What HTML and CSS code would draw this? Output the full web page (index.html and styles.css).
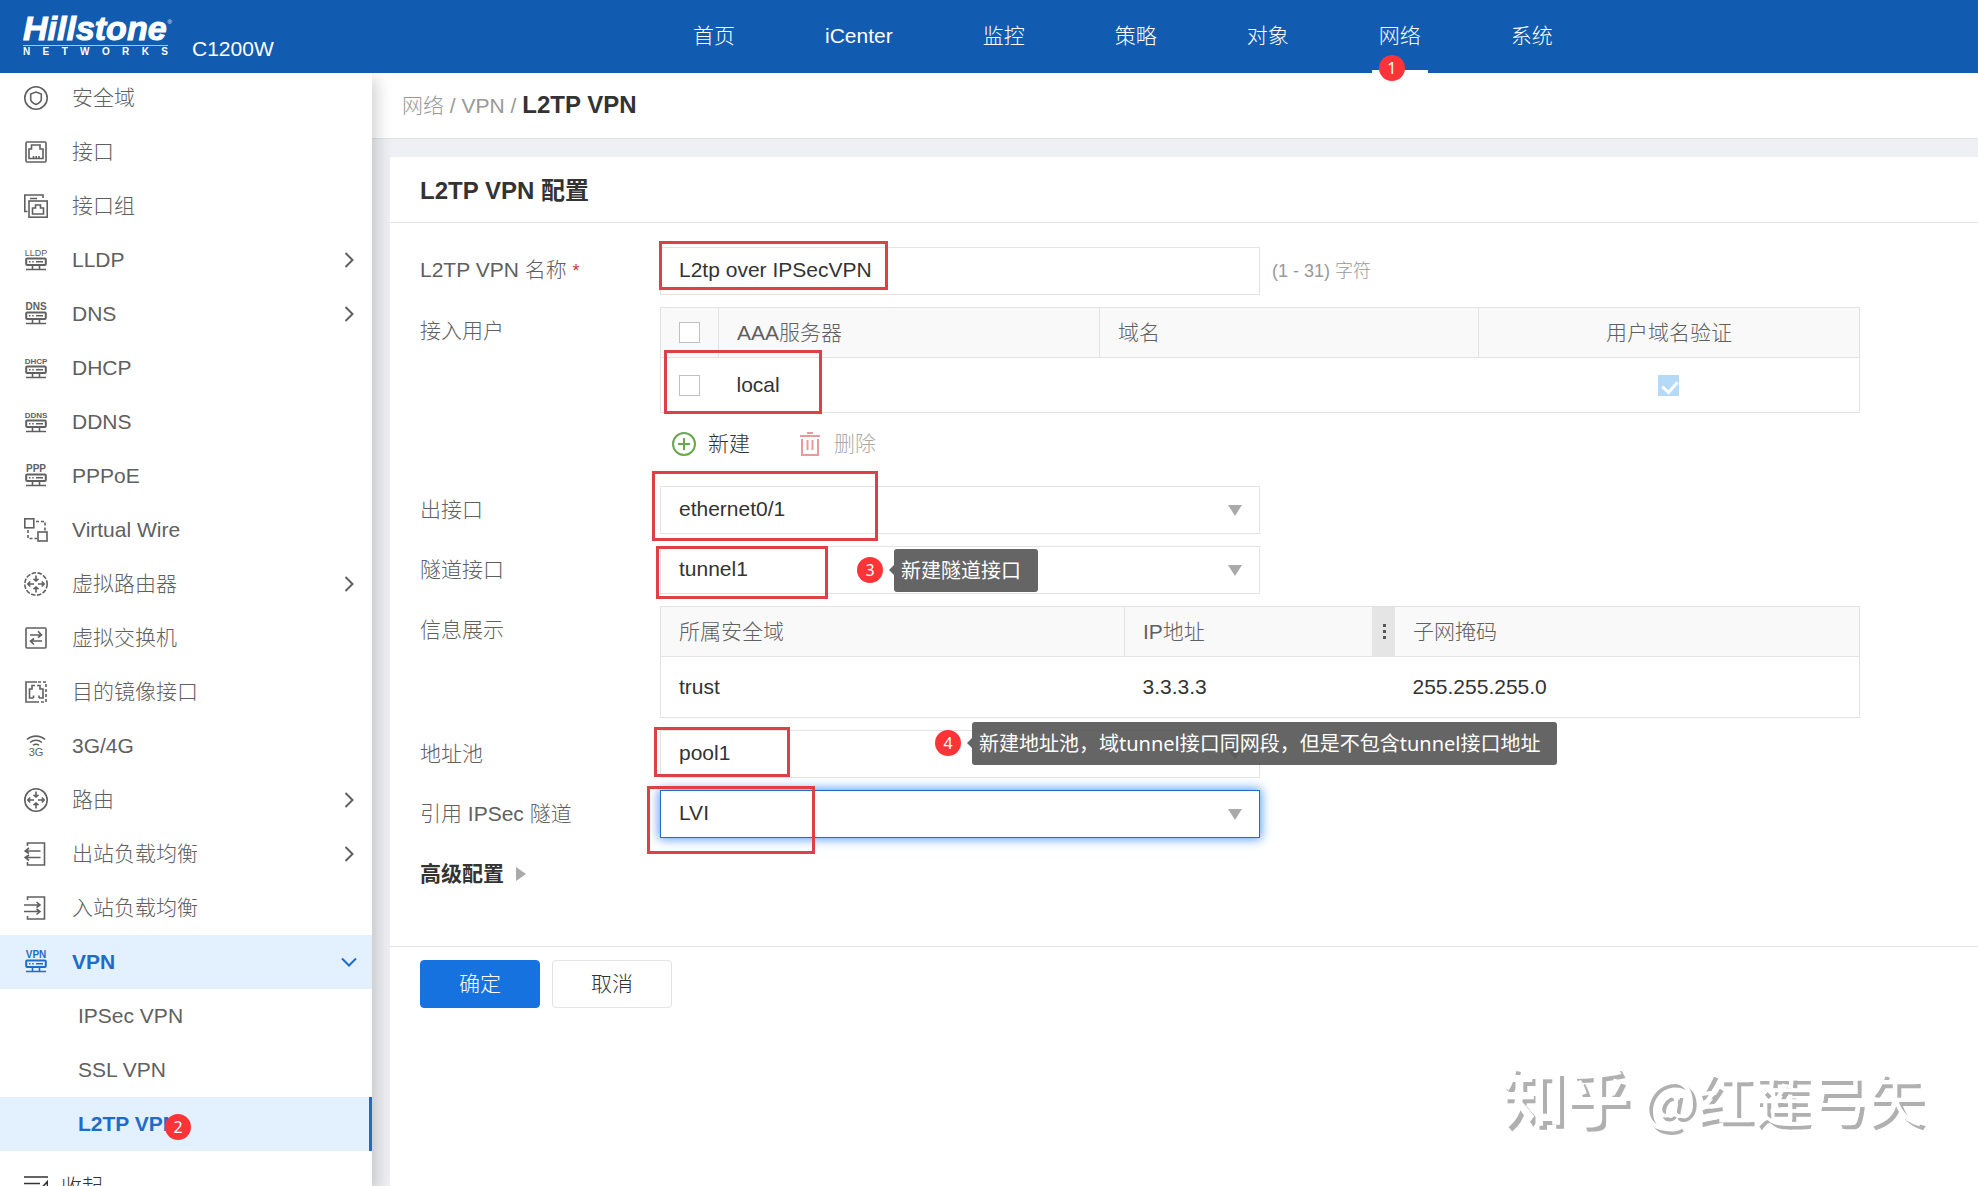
FILE: index.html
```html
<!DOCTYPE html>
<html lang="zh-CN">
<head>
<meta charset="utf-8">
<title>L2TP VPN</title>
<link rel="stylesheet" href="styles.css">
</head>
<body>
<svg class="defs" width="0" height="0" aria-hidden="true">
  <symbol id="server" viewBox="0 0 24 24">
    <rect x="2.200" y="10.500" width="19.600" height="6.500" rx="1" stroke-width="2"/>
    <path d="M5 13.800h1.500M8.200 13.800h1.500M12 13.800h7M8.500 17v4M15.500 17v4M2 21.500h20"/>
  </symbol>
  <symbol id="zone" viewBox="0 0 24 24"><circle cx="12" cy="12" r="11.200"/><path d="M12 6l5.300 2v5.200c0 2.400-2.400 4-5.300 5.300-2.900-1.300-5.300-2.900-5.300-5.300V8z"/></symbol>
  <symbol id="port" viewBox="0 0 24 24"><rect x="2" y="2" width="20" height="20" rx="1"/><path d="M5 18.500V9h2.500V5H16v4h3v9.500zM9.500 18.500v-2.500M12.200 18.500v-2.500M15 18.500v-2.500"/></symbol>
  <symbol id="ports" viewBox="0 0 24 24"><path d="M3.500 17.500H.8V1H19v3M6 4.500h7"/><rect x="5" y="7" width="18.200" height="16.200"/><path d="M8.500 20v-6h3v-3h5v3h3v6z"/></symbol>
  <symbol id="wire" viewBox="0 0 24 24"><rect x=".8" y=".8" width="9" height="9"/><rect x="14" y="14" width="9" height="9"/><path d="M12 3.500h9v10M4 12v8.500h9" stroke-dasharray="3 2"/></symbol>
  <symbol id="arrows" viewBox="0 0 24 24"><path d="M12 3.500v5.500M9.500 6.800L12 9l2.500-2.200M12 20.500V15M9.500 17.200L12 15l2.500 2.200M10 12H4M6.200 9.500L3.800 12l2.400 2.500M14 12h6M17.800 9.500l2.400 2.500-2.400 2.500"/></symbol>
  <symbol id="switch" viewBox="0 0 24 24"><rect x="2" y="2" width="20" height="20" rx="1"/><path d="M6 9h11.500M14 5.200L17.500 9 14 11.500M18 15H6.500M10 12.500L6.500 15l3.500 3.500"/></symbol>
  <symbol id="mirror" viewBox="0 0 24 24"><path d="M13 2H2v20h10"/><path d="M14 2h8v20H12" stroke-dasharray="3 2"/><path d="M9.500 18H5.500V9H8V5.500h3M13 5.500h3V9h3v9h-4M9.500 18v-2.500M15 18v-2.500"/></symbol>
  <symbol id="signal" viewBox="0 0 24 24"><path d="M3 5.500c5-4.500 13-4.500 18 0M6 8.500c3.500-3 8.500-3 12 0M9 11.200c1.800-1.200 4.200-1.200 6 0"/></symbol>
  <symbol id="outbound" viewBox="0 0 24 24"><path d="M3.500 4V1h17v22h-17v-3M16.500 9H1.500M5 6L1.200 9 5 11.500M16.500 15.500H1.500M5 13L1.200 15.500 5 18.500"/></symbol>
  <symbol id="inbound" viewBox="0 0 24 24"><path d="M3.500 4V1h17v22h-17v-3M0 9h15.500M12.500 6L16 9l-3.500 2.500M0 15.500h15.500M12.500 13l3.500 2.500-3.500 3"/></symbol>
  <symbol id="chevron" viewBox="0 0 16 16"><path d="M4.500 1l7 7-7 7"/></symbol>
</svg>

<header class="topbar">
  <div class="brand">
    <div class="logo">
      <div class="logo-name">Hillstone</div>
      <div class="logo-sub"><span>N</span><span>E</span><span>T</span><span>W</span><span>O</span><span>R</span><span>K</span><span>S</span></div>
      <span class="logo-mark">®</span>
    </div>
    <span class="model">C1200W</span>
  </div>
  <nav class="topnav">
    <a href="#">首页</a>
    <a href="#">iCenter</a>
    <a href="#">监控</a>
    <a href="#">策略</a>
    <a href="#">对象</a>
    <a href="#" class="current">网络<span class="badge badge-1">1</span></a>
    <a href="#">系统</a>
  </nav>
</header>

<div class="shell">
  <aside class="sidebar">
    <nav class="menu">
      <a href="#"><svg class="icon" viewBox="0 0 24 24"><use href="#zone"/></svg>安全域</a>
      <a href="#"><svg class="icon" viewBox="0 0 24 24"><use href="#port"/></svg>接口</a>
      <a href="#"><svg class="icon" viewBox="0 0 24 24"><use href="#ports"/></svg>接口组</a>
      <a href="#"><svg class="icon" viewBox="0 0 24 24"><use href="#server"/><text x="12" y="8" font-size="9">LLDP</text></svg>LLDP<svg class="chevron"><use href="#chevron"/></svg></a>
      <a href="#"><svg class="icon" viewBox="0 0 24 24"><use href="#server"/><text x="12" y="8" font-size="10" font-weight="700">DNS</text></svg>DNS<svg class="chevron"><use href="#chevron"/></svg></a>
      <a href="#"><svg class="icon" viewBox="0 0 24 24"><use href="#server"/><text x="12" y="8" font-size="8" font-weight="700">DHCP</text></svg>DHCP</a>
      <a href="#"><svg class="icon" viewBox="0 0 24 24"><use href="#server"/><text x="12" y="8" font-size="8" font-weight="700">DDNS</text></svg>DDNS</a>
      <a href="#"><svg class="icon" viewBox="0 0 24 24"><use href="#server"/><text x="12" y="8" font-size="10" font-weight="700">PPP</text></svg>PPPoE</a>
      <a href="#"><svg class="icon" viewBox="0 0 24 24"><use href="#wire"/></svg>Virtual Wire</a>
      <a href="#"><svg class="icon" viewBox="0 0 24 24"><circle cx="12" cy="12" r="11.200" stroke-dasharray="4.500 1.500"/><use href="#arrows"/></svg>虚拟路由器<svg class="chevron"><use href="#chevron"/></svg></a>
      <a href="#"><svg class="icon" viewBox="0 0 24 24"><use href="#switch"/></svg>虚拟交换机</a>
      <a href="#"><svg class="icon" viewBox="0 0 24 24"><use href="#mirror"/></svg>目的镜像接口</a>
      <a href="#"><svg class="icon" viewBox="0 0 24 24"><use href="#signal"/><text x="12" y="22" font-size="11">3G</text></svg>3G/4G</a>
      <a href="#"><svg class="icon" viewBox="0 0 24 24"><circle cx="12" cy="12" r="11.200"/><use href="#arrows"/></svg>路由<svg class="chevron"><use href="#chevron"/></svg></a>
      <a href="#"><svg class="icon" viewBox="0 0 24 24"><use href="#outbound"/></svg>出站负载均衡<svg class="chevron"><use href="#chevron"/></svg></a>
      <a href="#"><svg class="icon" viewBox="0 0 24 24"><use href="#inbound"/></svg>入站负载均衡</a>
      <a href="#" class="open"><svg class="icon" viewBox="0 0 24 24"><use href="#server"/><text x="12" y="8" font-size="10" font-weight="700">VPN</text></svg>VPN<svg class="chevron down"><use href="#chevron"/></svg></a>
      <a href="#" class="sub">IPSec VPN</a>
      <a href="#" class="sub">SSL VPN</a>
      <a href="#" class="sub selected">L2TP VPN<span class="badge badge-2">2</span></a>
    </nav>
    <button type="button" class="collapse"><svg class="icon" viewBox="0 0 24 24"><path d="M0 2h24M0 8.500h16M0 15h16M0 22h24M23.500 6.500v11L18.500 12z"/></svg>收起</button>
  </aside>

  <main class="main">
    <div class="crumbs"><a href="#">网络</a> / <a href="#">VPN</a> / <strong>L2TP VPN</strong></div>
    <section class="card">
      <h1>L2TP VPN 配置</h1>
      <form>
        <div class="rows">
          <div class="row">
            <label for="name">L2TP VPN 名称 <span class="required">*</span></label>
            <div class="field">
              <input id="name" class="control" type="text" value="L2tp over IPSecVPN">
              <span class="hint">(1 - 31) 字符</span>
              <span class="mark mark-name"></span>
            </div>
          </div>

          <div class="row">
            <span class="label">接入用户</span>
            <div class="field stack">
              <table class="grid users">
                <colgroup><col class="c-check"><col class="c-server"><col class="c-domain"><col></colgroup>
                <thead><tr><th class="tick"><input type="checkbox" aria-label="全选"></th><th>AAA服务器</th><th>域名</th><th class="center">用户域名验证</th></tr></thead>
                <tbody><tr><td class="tick"><input type="checkbox" aria-label="local"></td><td>local</td><td></td><td class="center"><input type="checkbox" aria-label="用户域名验证" checked disabled></td></tr></tbody>
              </table>
              <div class="tools">
                <button type="button"><svg class="tool-icon add" viewBox="0 0 24 24"><circle cx="12" cy="12" r="11"/><path d="M12 6v12M6 12h12"/></svg>新建</button>
                <button type="button" disabled><svg class="tool-icon del" viewBox="0 0 24 24"><path d="M2 4h20M9 1h6M4 7v16h16V7M9.500 8v10M14.500 8v10"/></svg>删除</button>
              </div>
              <span class="mark mark-user"></span>
            </div>
          </div>

          <div class="row">
            <label for="out">出接口</label>
            <div class="field">
              <div class="select"><select id="out" class="control"><option>ethernet0/1</option></select></div>
              <span class="mark mark-out"></span>
            </div>
          </div>

          <div class="row">
            <label for="tunnel">隧道接口</label>
            <div class="field">
              <div class="select"><select id="tunnel" class="control"><option>tunnel1</option></select></div>
              <span class="mark mark-tunnel"></span>
              <span class="badge badge-3">3</span><span class="tip tip-3">新建隧道接口</span>
            </div>
          </div>

          <div class="row">
            <span class="label">信息展示</span>
            <div class="field">
              <table class="grid info">
                <colgroup><col class="c-zone"><col class="c-ip"><col></colgroup>
                <thead><tr><th>所属安全域</th><th>IP地址</th><th class="mask">子网掩码<span class="handle"></span></th></tr></thead>
                <tbody><tr><td>trust</td><td>3.3.3.3</td><td class="mask">255.255.255.0</td></tr></tbody>
              </table>
            </div>
          </div>

          <div class="row">
            <label for="pool">地址池</label>
            <div class="field">
              <div class="select"><select id="pool" class="control"><option>pool1</option></select></div>
              <span class="mark mark-pool"></span>
              <span class="badge badge-4">4</span><span class="tip tip-4">新建地址池，域tunnel接口同网段，但是不包含tunnel接口地址</span>
            </div>
          </div>

          <div class="row">
            <label for="ipsec">引用 IPSec 隧道</label>
            <div class="field">
              <div class="select"><select id="ipsec" class="control active"><option>LVI</option></select></div>
              <span class="mark mark-ipsec"></span>
            </div>
          </div>

          <button type="button" class="advanced">高级配置</button>
        </div>
        <div class="actions">
          <button type="submit" class="primary">确定</button>
          <button type="button">取消</button>
        </div>
      </form>
    </section>
  </main>
</div>
<div class="watermark"><span class="site">知乎</span> <span>@红莲弓矢</span></div>
</body>
</html>
```

FILE: styles.css
```css
* { box-sizing: border-box; }

body {
  margin: 0;
  height: 100vh;
  display: flex;
  flex-direction: column;
  overflow: hidden;
  background: #eff0f4;
  color: #333;
  font: 300 21px/30px "Liberation Sans", "Noto Sans CJK SC", sans-serif;
}

a { color: inherit; text-decoration: none; }
button, input, select { font: inherit; color: inherit; }
button { padding: 0; border: 0; background: none; }
.defs { position: absolute; }

/* top bar */
.topbar {
  position: relative;
  z-index: 2;
  flex: 0 0 73px;
  display: flex;
  background: #115bb0;
  color: #fff;
}
.brand {
  flex: 0 0 686px;
  display: flex;
  gap: 24px;
  padding: 12px 0 0 23px;
}
.logo { position: relative; width: 145px; }
.logo-name {
  border-bottom: 1px solid #a9c6ea;
  font-size: 34px;
  line-height: 33px;
  font-weight: 700;
  font-style: italic;
  -webkit-text-stroke: 1px #fff;
}
.logo-sub {
  display: flex;
  justify-content: space-between;
  font-size: 10px;
  line-height: 12px;
  font-weight: 700;
}
.logo-mark {
  position: absolute;
  top: 6px;
  right: -4px;
  font-size: 6px;
  line-height: 8px;
}
.model { padding-top: 22px; }
.topnav { display: flex; gap: 76px; }
.topnav a {
  position: relative;
  padding: 21px 7px 0;
}
.topnav .current { border-bottom: 3px solid #fff; }

/* side menu */
.shell { flex: 1; min-height: 0; display: flex; }
.sidebar {
  position: relative;
  z-index: 1;
  flex: 0 0 372px;
  background: #fff;
  color: #606060;
  box-shadow: 6px 6px 14px rgba(0, 0, 0, .16);
}
.menu { margin-top: -2px; }
.menu a {
  position: relative;
  display: flex;
  align-items: center;
  gap: 24px;
  height: 54px;
  padding: 0 15px 0 24px;
}
.icon {
  flex: none;
  width: 24px;
  height: 24px;
  fill: none;
  stroke: currentColor;
  stroke-width: 1.6;
}
.icon text {
  fill: currentColor;
  stroke: none;
  text-anchor: middle;
  font-family: "Liberation Sans", sans-serif;
}
.chevron {
  width: 16px;
  height: 16px;
  margin-left: auto;
  fill: none;
  stroke: currentColor;
  stroke-width: 2;
}
.chevron.down { transform: rotate(90deg); }
.menu .open, .menu .selected {
  background: #e3f0fd;
  color: #1e6cc7;
  font-weight: 700;
}
.menu .sub { padding-left: 78px; }
.menu .selected { border-right: 3px solid #1e6cc7; }
.collapse {
  display: flex;
  align-items: center;
  gap: 13px;
  height: 72px;
  padding-left: 24px;
  color: #333;
}

/* content */
.main { flex: 1; min-width: 0; display: flex; flex-direction: column; }
.crumbs {
  height: 66px;
  padding: 17px 30px;
  border-bottom: 1px solid #e2e3e6;
  background: #fff;
  color: #999;
}
.crumbs strong { color: #333; font-size: 24px; font-weight: 700; }
.card {
  flex: 1;
  margin: 18px 0 0 18px;
  background: #fff;
}
h1 {
  margin: 0;
  padding: 19px 30px 16px;
  border-bottom: 1px solid #e5e5e5;
  font-size: 24px;
  line-height: 30px;
  font-weight: 700;
}
.rows {
  display: grid;
  gap: 12px;
  padding: 23px 30px 48px;
}
.row { display: grid; grid-template-columns: 240px minmax(0, 1fr); }
.row label, .label { color: #606060; line-height: 48px; }
.required { color: #d0353a; font-size: 18px; }
.field { position: relative; display: flex; align-items: center; gap: 12px; }
.stack { flex-direction: column; align-items: stretch; gap: 0; }
.control {
  width: 600px;
  height: 48px;
  padding: 0 18px 2px;
  border: 1px solid #e3e3e3;
  border-radius: 0;
  background: #fff;
  outline: 0;
}
.select { position: relative; }
.select .control { display: block; appearance: none; }
.select::after {
  content: "";
  position: absolute;
  right: 18px;
  top: 19px;
  border: 7px solid transparent;
  border-top: 11px solid #aaa;
  border-bottom: 0;
}
.control.active { border-color: #1e6cc7; box-shadow: 0 0 10px 1px #4f97f5; }
.hint { color: #999; font-size: 18px; }

.grid {
  width: 100%;
  max-width: 1200px;
  border: 1px solid #e3e3e3;
  border-collapse: collapse;
  table-layout: fixed;
}
.grid th, .grid td { padding: 0 18px; text-align: left; font-weight: 300; }
.grid th {
  position: relative;
  height: 50px;
  border: 1px solid #e3e3e3;
  background: #f9f9f9;
  color: #606060;
}
.grid .center { text-align: center; }
.grid .tick { padding-right: 0; }
.users td { height: 55px; }
.info td { height: 61px; }
.c-check { width: 58px; }
.c-server { width: 381px; }
.c-domain { width: 379px; }
.c-zone { width: 464px; }
.c-ip { width: 248px; }
.grid .mask { padding-left: 40px; }
.handle {
  position: absolute;
  inset: 0 auto 0 0;
  display: grid;
  place-items: center;
  width: 22px;
  background: #e5e5e5;
}
.handle::after {
  content: "";
  width: 3px;
  height: 3px;
  background: #555;
  box-shadow: 0 -6px #555, 0 6px #555;
}

input[type="checkbox"] {
  appearance: none;
  position: relative;
  display: block;
  width: 21px;
  height: 21px;
  margin: 0;
  border: 1px solid #c0c0c0;
  background: #fff;
}
.center input[type="checkbox"] { margin: 0 auto; }
input[type="checkbox"]:checked { border-color: #b5daf7; background: #b5daf7; }
input[type="checkbox"]:checked::after {
  content: "";
  position: absolute;
  left: 6px;
  top: 2px;
  width: 7px;
  height: 12px;
  border: solid #fff;
  border-width: 0 3px 3px 0;
  transform: rotate(42deg);
}

.tools { display: flex; gap: 48px; height: 61px; padding: 0 12px; }
.tools button { display: flex; align-items: center; gap: 12px; }
.tools button:disabled { color: #aaa; }
.tool-icon { width: 24px; height: 24px; fill: none; stroke-width: 2; }
.add { stroke: #6aa84f; }
.del { stroke: #e99a9c; }

.advanced {
  display: flex;
  align-items: center;
  gap: 12px;
  height: 48px;
  font-weight: 700;
}
.advanced::after {
  content: "";
  border: 7px solid transparent;
  border-left: 10px solid #aaa;
  border-right: 0;
}
.actions {
  display: flex;
  gap: 12px;
  padding: 13px 30px;
  border-top: 1px solid #e5e5e5;
}
.actions button {
  width: 120px;
  height: 48px;
  border: 1px solid #e3e3e3;
  border-radius: 4px;
  background: #fff;
}
.actions .primary { border-color: #1672de; background: #1672de; color: #fff; }

/* annotations laid over the page */
.badge {
  position: absolute;
  z-index: 1;
  width: 26px;
  height: 26px;
  border-radius: 50%;
  background: #fb3438;
  color: #fff;
  font: 400 16px/26px "Noto Sans", sans-serif;
  text-align: center;
}
.badge-1 { left: 7px; top: 55px; }
.badge-2 { left: 165px; top: 17px; }
.badge-3 { left: 197px; top: 11px; }
.badge-4 { left: 275px; top: 0; }
.mark { position: absolute; border: 3px solid #dc4245; }
.mark-name { left: -1px; top: -5px; width: 229px; height: 49px; }
.mark-user { left: 4px; top: 43px; width: 158px; height: 64px; }
.mark-out { left: -8px; top: -15px; width: 226px; height: 70px; }
.mark-tunnel { left: -4px; top: 0; width: 172px; height: 53px; }
.mark-pool { left: -6px; top: -3px; width: 136px; height: 50px; }
.mark-ipsec { left: -13px; top: -4px; width: 168px; height: 68px; }
.tip {
  position: absolute;
  padding: 0 7px;
  border-radius: 3px;
  background: rgba(80, 80, 80, .88);
  color: #fff;
  font: 400 20px/43px "Noto Sans", "Noto Sans CJK SC", sans-serif;
  white-space: nowrap;
}
.tip::before {
  content: "";
  position: absolute;
  right: 100%;
  top: 16px;
  border: 5px solid transparent;
  border-right-color: rgba(80, 80, 80, .88);
  border-left: 0;
}
.tip-3 { left: 234px; top: 3px; padding-right: 17px; }
.tip-4 { left: 312px; top: -8px; padding-right: 17px; }
.watermark {
  position: fixed;
  right: 54px;
  bottom: 54px;
  z-index: 3;
  color: #fff;
  font-weight: 400;
  font-size: 57px;
  line-height: 72px;
  font-family: "Noto Sans CJK SC", sans-serif;
  text-shadow: 4px 4px #b0b0b0;
}
.watermark .site { font-size: 64px; font-weight: 700; }
```
